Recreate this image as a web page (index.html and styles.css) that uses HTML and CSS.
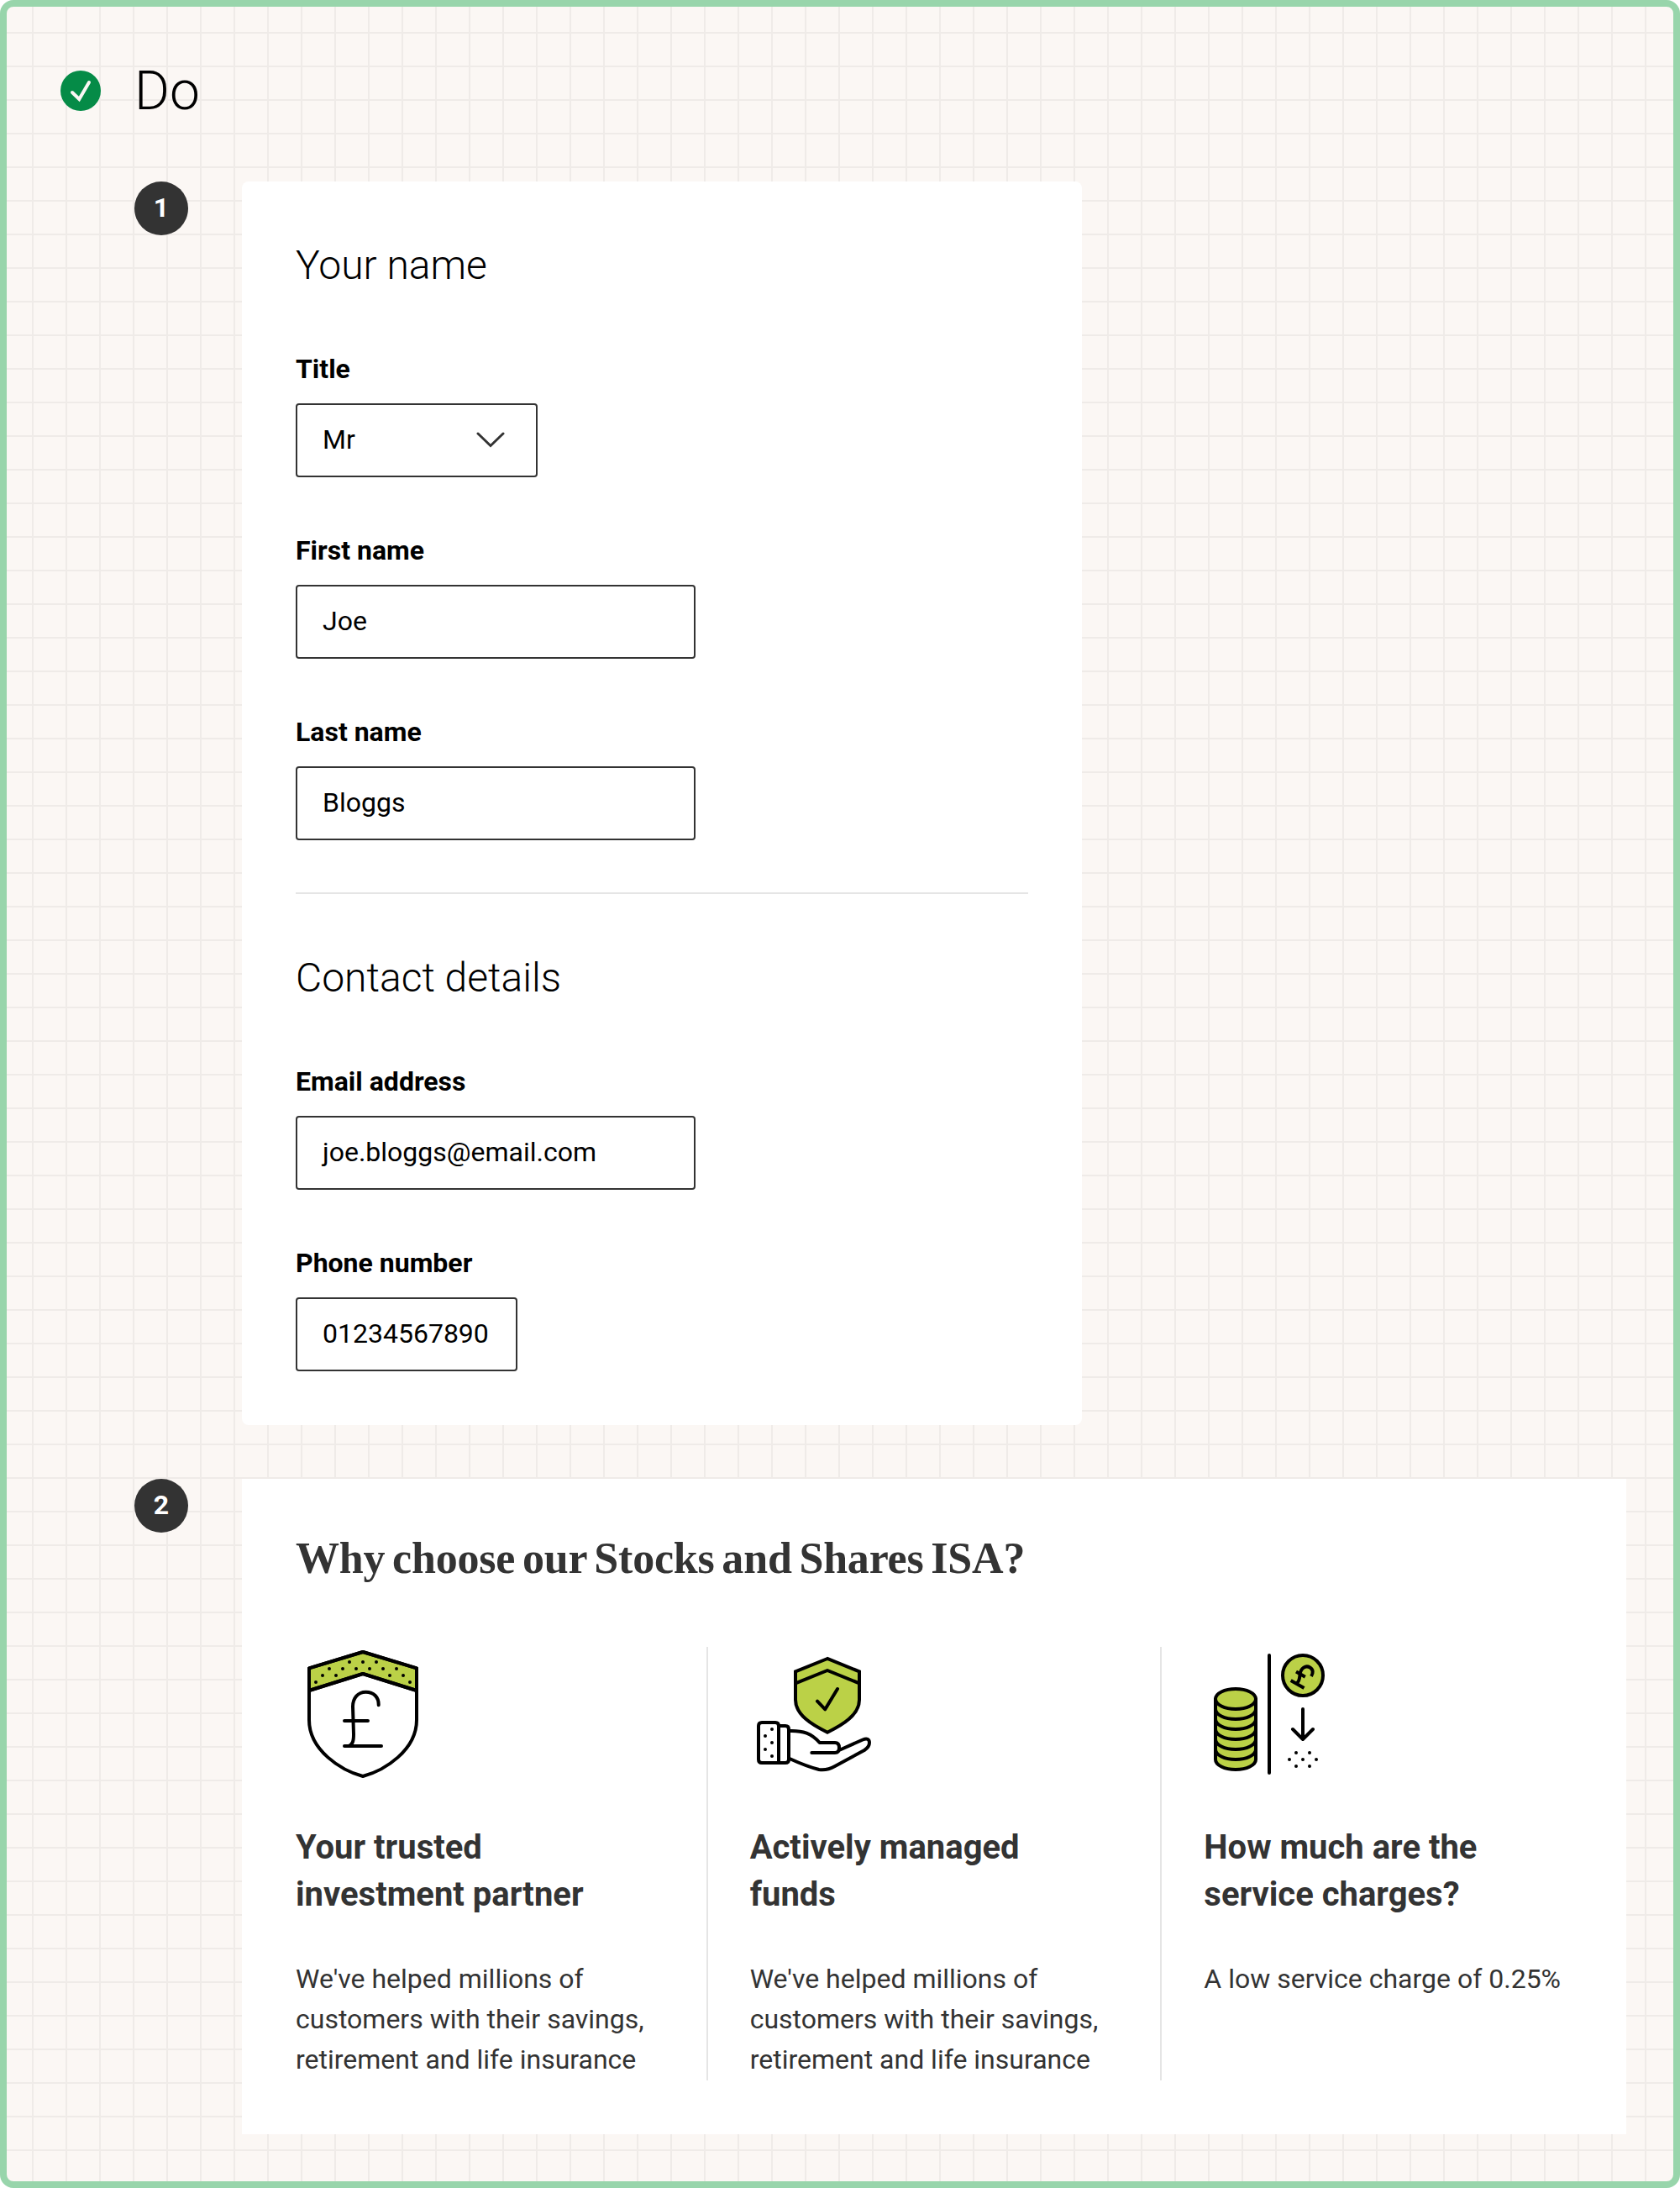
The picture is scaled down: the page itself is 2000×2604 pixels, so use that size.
FILE: index.html
```
<!DOCTYPE html>
<html lang="en">
<head>
<meta charset="utf-8">
<title>Do</title>
<link rel="stylesheet" href="styles.css">
</head>
<body>
<main class="board">
  <header class="verdict">
    <svg class="tick" viewBox="0 0 48 48"><circle cx="24" cy="24" r="24" fill="#058b47"/><path d="M14 26l8.300 8L34 14" fill="none" stroke="#fbf7f4" stroke-width="4" stroke-linecap="round"/></svg>
    <h1>Do</h1>
  </header>
  <section class="example">
    <span class="number">1</span>
    <form class="card form">
      <h2>Your name</h2>
      <div class="field"><span class="label">Title</span>
        <div class="box select">Mr<svg class="chevron" viewBox="0 0 34 20"><path d="M2 2l15 14.500L32 2" fill="none" stroke="#333" stroke-width="3" stroke-linecap="round"/></svg></div></div>
      <div class="field"><span class="label">First name</span><div class="box">Joe</div></div>
      <div class="field"><span class="label">Last name</span><div class="box">Bloggs</div></div>
      <hr>
      <h2>Contact details</h2>
      <div class="field"><span class="label">Email address</span><div class="box">joe.bloggs@email.com</div></div>
      <div class="field"><span class="label">Phone number</span><div class="box phone">01234567890</div></div>
    </form>
  </section>
  <section class="example">
    <span class="number">2</span>
    <article class="card reasons">
      <h2 class="serif">Why choose our Stocks and Shares ISA?</h2>
      <div class="columns">
        <div class="column">
          <svg class="icon" viewBox="0 0 160 160">
            <path d="M16 25.300L80 6l64 19.300V52L80 32 16 52z" fill="#bbd147"/>
            <path d="M16 52L80 32l64 20M80 6L16 25.300V87C16 123 54 147 80 154c26-7 64-31 64-67V25.300z"/>
            <path d="M58 88h28M58 118h44M98.700 69.300C99 60 93 53.700 83.500 53.700S68 61 68 71l1 33c0 8-1 12-6 14"/>
            <path class="dots" d="M64 18h0M80 18h0M96 18h0M40 26h0M56 26h0M72 26h0M88 26h0M104 26h0M120 26h0M32 34h0M48 34h0M112 34h0M128 34h0M24 42h0M136 42h0"/>
          </svg>
          <h3>Your trusted<br>investment partner</h3>
          <p>We've helped millions of customers with their savings, retirement and life insurance</p>
        </div>
        <div class="column">
          <svg class="icon" viewBox="0 0 160 160">
            <path class="mitre" d="M92 14L54 29.300V63c0 18 20 30 38 38.700C110 93 130 81 130 63V29.300z" fill="#bbd147"/>
            <path d="M54 43.300L92 28l38 15.300M80 64.700l9.300 9.600L104 50"/>
            <path d="M34 138H14q-4 0-4-4V94q0-4 4-4h16q4 0 4 4zM34 94h8q4 0 4 4v36q0 4-4 4h-8"/>
            <path d="M47 100c16-.5 26 3 35.700 14H101q5 0 5 6t-5 6H73.300M106 123L134 110.500c5-2 8-1 8 3.500s-3 7-6 9L101 142c-7 4-12 5-19 4-12-3-23-7.500-35-13"/>
            <path class="dots" d="M26 98h0M18 106h0M26 114h0M18 122h0M26 130h0"/>
          </svg>
          <h3>Actively managed<br>funds</h3>
          <p>We've helped millions of customers with their savings, retirement and life insurance</p>
        </div>
        <div class="column">
          <svg class="icon" viewBox="0 0 160 160">
            <path d="M14 62a24 12 0 0 1 48 0v72a24 12 0 0 1-48 0z" fill="#bbd147"/>
            <path d="M14 62a24 12 0 0 0 48 0M14 74a24 12 0 0 0 48 0M14 86a24 12 0 0 0 48 0M14 98a24 12 0 0 0 48 0M14 110a24 12 0 0 0 48 0M14 122a24 12 0 0 0 48 0"/>
            <path d="M78 10v140M118 74v36M106 98l12 12 12-12"/>
            <circle cx="118" cy="34" r="24" fill="#bbd147"/>
            <path class="butt" d="M103.700 40l15.800 9M110 29.500l10.800 6.200M110.500 43.500c4-3 3.500-6.500 4-10.500 1-8 7-11.500 12-8.500 4 2.500 4 6.500 1.500 10.500"/>
            <path class="dots" d="M110 126h0M126 126h0M102 134h0M118 134h0M134 134h0M110 142h0M126 142h0"/>
          </svg>
          <h3>How much are the<br>service charges?</h3>
          <p>A low service charge of 0.25%</p>
        </div>
      </div>
    </article>
  </section>
</main>
</body>
</html>
```
FILE: styles.css
```
* { box-sizing: border-box; }
body { margin: 0; background: #fff; font-family: Roboto, sans-serif; color: #000; }
h1, h2, h3, p { margin: 0; }
.board {
  height: 2604px;
  padding: 60px 56px 0 64px;
  border: 8px solid #98d5ab;
  border-radius: 16px;
  background-color: #fbf7f4;
  background-image:
    linear-gradient(#efebe8 2px, transparent 2px),
    linear-gradient(90deg, #efebe8 2px, transparent 2px);
  background-size: 40px 40px;
  background-position: 30px 30px;
}
.verdict { display: flex; align-items: center; gap: 40px; height: 80px; }
.tick { width: 48px; height: 48px; }
h1 { padding-top: 2px; font-size: 64px; font-weight: 300; line-height: 78px; }
.example { display: flex; align-items: flex-start; gap: 64px; margin: 68px 0 0 88px; }
.example + .example { margin-top: 64px; }
.number {
  flex: none;
  width: 64px; height: 64px;
  border-radius: 50%;
  background: #333;
  color: #fff;
  font-size: 32px; font-weight: 700; line-height: 62px;
  text-align: center;
}
.card { background: #fff; padding: 64px; }
.form { width: 1000px; height: 1480px; border-radius: 8px; }
h2 { font-size: 48px; font-weight: 300; line-height: 72px; }
.field { margin-top: 64px; font-size: 32px; }
.label { display: block; font-weight: 700; line-height: 46px; margin-bottom: 18px; }
.box {
  display: flex; align-items: center; justify-content: space-between;
  width: 476px; height: 88px;
  padding: 0 30px 2px;
  border: 2px solid #333;
  border-radius: 4px;
}
.select { width: 288px; padding-right: 37px; }
.chevron { width: 34px; height: 20px; margin-top: 2px; }
.phone { width: 264px; }
hr { height: 2px; margin: 62px 0 64px; border: 0; background: #e5e5e5; }
.reasons { flex: 1; height: 780px; color: #333; }
.serif {
  padding-bottom: 10px;
  font-family: "Liberation Serif", serif;
  font-weight: 700;
  font-size: 52px;
  line-height: 62px;
  letter-spacing: -0.2px;
  word-spacing: -4px;
  white-space: nowrap;
}
.columns { display: grid; grid-template-columns: repeat(3, 1fr); gap: 102px; height: 516px; margin-top: 64px; }
.column { position: relative; }
.column + .column::before {
  content: "";
  position: absolute; left: -52px; top: 0; bottom: 0;
  width: 2px;
  background: #e5e5e5;
}
.icon { display: block; width: 160px; height: 160px; fill: none; stroke: #000; stroke-width: 4; stroke-linecap: round; stroke-linejoin: round; }
.mitre { stroke-linejoin: miter; }
.butt { stroke-linecap: butt; }
h3 { margin: 51px 0 48px; font-size: 40px; font-weight: 700; line-height: 56px; white-space: nowrap; }
p { font-size: 32px; line-height: 48px; }
.column p { margin-right: -20px; }
```
